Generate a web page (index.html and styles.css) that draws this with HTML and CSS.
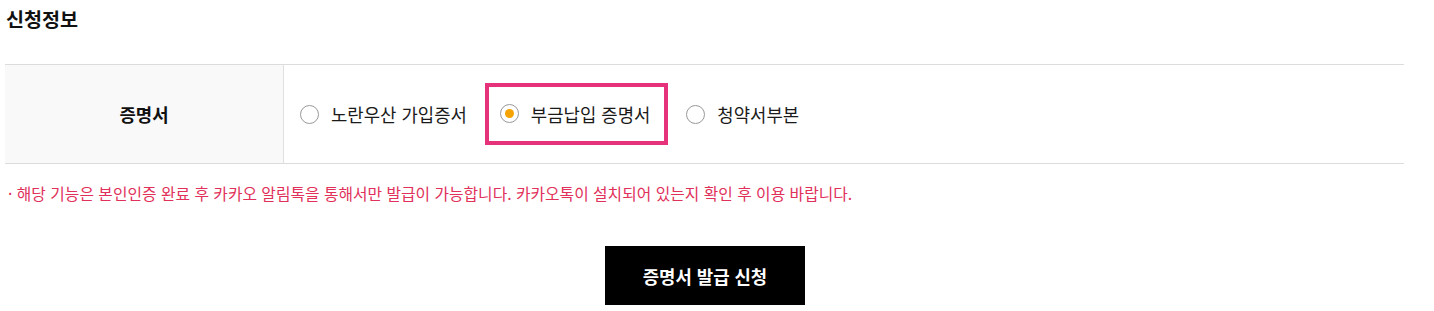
FILE: index.html
```html
<!DOCTYPE html>
<html lang="ko">
<head>
<meta charset="utf-8">
<link rel="stylesheet" href="styles.css">
</head>
<body>
<div class="page">
  <h2 class="title">신청정보</h2>
  <div class="table">
    <div class="th">증명서</div>
    <div class="td">
      <label class="opt"><span class="radio"></span><span>노란우산 가입증서</span></label>
      <label class="opt selected"><span class="radio on"></span><span>부금납입 증명서</span></label>
      <label class="opt"><span class="radio"></span><span>청약서부본</span></label>
    </div>
  </div>
  <p class="notice">· 해당 기능은 본인인증 완료 후 카카오 알림톡을 통해서만 발급이 가능합니다. 카카오톡이 설치되어 있는지 확인 후 이용 바랍니다.</p>
  <div class="actions"><button class="btn">증명서 발급 신청</button></div>
</div>
</body>
</html>
```
FILE: styles.css
```css
* { box-sizing: border-box; }
html, body { margin: 0; padding: 0; background: #fff; }
body { font-family: "Noto Sans CJK KR", "Noto Sans", sans-serif; color: #111; }
.page { padding: 0 30px 0 5px; width: 1434px; }
.title { margin: 0; padding: 5px 0 0 1px; font-size: 19.6px; font-weight: 700; line-height: 28px; height: 64px; }
.table { display: flex; border-top: 1px solid #dcdcdc; border-bottom: 1px solid #dcdcdc; height: 100px; width: 1399px; }
.th { width: 279px; background: #f9f9f9; border-right: 1px solid #e0e0e0; display: flex; align-items: center; justify-content: center; font-size: 17.8px; font-weight: 700; }
.td { flex: 1; display: flex; align-items: center; padding-left: 16px; }
.opt { display: flex; align-items: center; gap: 12px; font-size: 17.8px; color: #1a1a1a; height: 62px; margin-right: 18px; }
.opt.selected { border: 4px solid #e6327a; padding: 0 14px 0 11px; margin-right: 18px; margin-bottom: 1px; }
.radio { width: 19px; height: 19px; border: 1px solid #999; border-radius: 50%; background: #fff; display: inline-flex; align-items: center; justify-content: center; flex: none; }
.radio.on::after { content: ""; width: 9px; height: 9px; border-radius: 50%; background: #f5a300; }
.notice { margin: 0; padding: 20px 0 0 3px; font-size: 15.8px; color: #e1305a; line-height: 20px; height: 82px; }
.actions { display: flex; justify-content: center; padding-left: 1px; width: 1399px; }
.btn { width: 200px; height: 59px; background: #000; color: #fff; border: 0; font-family: inherit; font-size: 17.8px; font-weight: 700; }
```
